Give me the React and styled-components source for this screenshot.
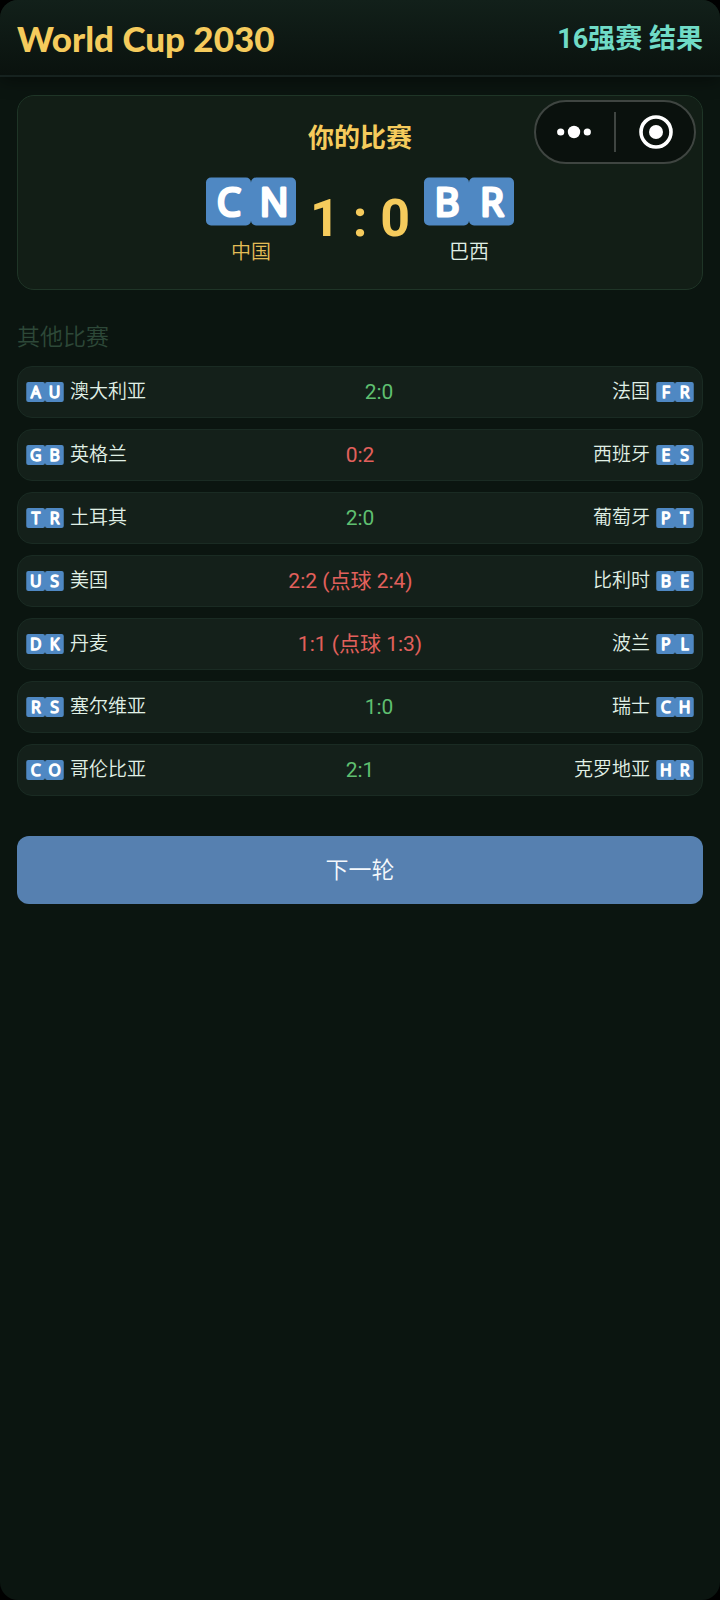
import React from 'react';
import styled, { createGlobalStyle } from 'styled-components';

const GlobalStyle = createGlobalStyle`
  * {
    box-sizing: border-box;
  }
  body {
    margin: 0;
    background: #000;
    color: #e0f0e6;
    font-family: Roboto, 'Noto Sans CJK SC', sans-serif;
  }
`;

const Page = styled.div`
  min-height: 100vh;
  border-radius: 18px;
  overflow: hidden;
  background: #0b1510;
`;

const TopBar = styled.header`
  display: flex;
  align-items: center;
  justify-content: space-between;
  height: 77px;
  padding: 0 17px;
  background: linear-gradient(#12201a, #0a120e);
  border-bottom: 2px solid #16221f;
  box-shadow: 0 4px 16px rgba(0, 0, 0, 0.4);
`;

const Brand = styled.h1`
  margin: 0;
  font-family: Lato, sans-serif;
  font-size: 35px;
  line-height: 46px;
  font-weight: 900;
  color: #f5cb5c;
`;

const Stage = styled.div`
  padding-top: 3px;
  font-size: 27px;
  line-height: 40px;
  font-weight: 700;
  color: #70dbc6;
`;

const Content = styled.main`
  padding: 18px 17px;
`;

const MatchCard = styled.section`
  padding: 25px 16px 23px;
  background: #121e16;
  border: 1px solid #1f3527;
  border-radius: 17px;
`;

const CardTitle = styled.h2`
  margin: 0 0 22px;
  font-size: 26px;
  line-height: 34px;
  font-weight: 700;
  text-align: center;
  color: #f5cb5c;
`;

const Versus = styled.div`
  display: flex;
  align-items: center;
  justify-content: center;
  gap: 14px;
`;

const Team = styled.div`
  display: flex;
  flex-direction: column;
  align-items: center;
  gap: 12px;
  font-size: 20px;
  line-height: 28px;
  font-weight: 350;
  color: ${({ $own }) => ($own ? '#e3bd56' : '#e0f0e6')};
`;

const BigScore = styled.div`
  padding-bottom: 6px;
  font-size: 52px;
  line-height: 60px;
  font-weight: 700;
  color: #f5cb5c;
`;

const SectionTitle = styled.h3`
  margin: 33px 0 13px;
  font-size: 23px;
  line-height: 30px;
  font-weight: 350;
  color: #2d4838;
`;

const MatchList = styled.ul`
  display: flex;
  flex-direction: column;
  gap: 11px;
  margin: 0;
  padding: 0;
  list-style: none;
`;

const MatchRow = styled.li`
  display: flex;
  align-items: center;
  justify-content: space-between;
  height: 52px;
  padding: 0 8px;
  background: #14201a;
  border: 1px solid #1a2b23;
  border-radius: 15px;
`;

const Side = styled.span`
  display: flex;
  align-items: center;
  gap: 6px;
  font-size: 19px;
  line-height: 28px;
  font-weight: 350;
`;

const Score = styled.span`
  font-size: 21px;
  line-height: 28px;
  font-weight: 400;
  color: ${({ $win }) => ($win ? '#5fbf70' : '#e2605c')};
`;

const NextButton = styled.button`
  display: block;
  width: 100%;
  height: 68px;
  margin-top: 40px;
  padding: 0 16px 4px;
  border: none;
  border-radius: 12px;
  background: #5680b0;
  color: #f4f8fc;
  font-family: inherit;
  font-size: 23px;
  font-weight: 350;
  cursor: pointer;
`;

const Capsule = styled.div`
  position: fixed;
  top: 100px;
  right: 24px;
  display: flex;
  align-items: center;
  gap: 2px;
  width: 162px;
  height: 64px;
  background: #0a110d;
  border: 2px solid #3f4541;
  border-radius: 32px;
`;

const CapsuleButton = styled.button`
  display: flex;
  flex: 1;
  align-items: center;
  justify-content: center;
  height: 100%;
  padding: 0;
  border: none;
  background: none;
  cursor: pointer;
`;

const CapsuleDivider = styled.span`
  width: 2px;
  height: 40px;
  background: #3f4541;
`;

const FlagSvg = styled.svg`
  display: block;
  overflow: visible;
  width: ${({ $big }) => ($big ? '90px' : '38px')};
  height: ${({ $big }) => ($big ? '49px' : '20px')};
`;

// regional indicator pair, one blue tile per letter
const Flag = ({ code, big }) => (
  <FlagSvg $big={big} viewBox="0 0 90 48" role="img" aria-label={code}>
    {code.split('').map((letter, i) => (
      <g key={i}>
        <rect x={i * 45} width="45" height="48" rx="5" fill="#4f88c3" />
        <text
          x={i * 45 + 23}
          y="38"
          textAnchor="middle"
          fontFamily="'Open Sans', sans-serif"
          fontSize="38"
          fontWeight={big ? 400 : 500}
          fill="#fff"
          stroke="#fff"
          strokeWidth="3.2"
          strokeLinejoin="round"
        >
          {letter}
        </text>
      </g>
    ))}
  </FlagSvg>
);

const matches = [
  { home: ['AU', '澳大利亚'], away: ['FR', '法国'], score: '2:0', win: true },
  { home: ['GB', '英格兰'], away: ['ES', '西班牙'], score: '0:2', win: false },
  { home: ['TR', '土耳其'], away: ['PT', '葡萄牙'], score: '2:0', win: true },
  { home: ['US', '美国'], away: ['BE', '比利时'], score: '2:2 (点球 2:4)', win: false },
  { home: ['DK', '丹麦'], away: ['PL', '波兰'], score: '1:1 (点球 1:3)', win: false },
  { home: ['RS', '塞尔维亚'], away: ['CH', '瑞士'], score: '1:0', win: true },
  { home: ['CO', '哥伦比亚'], away: ['HR', '克罗地亚'], score: '2:1', win: true },
];

const App = () => {
  return (
    <Page>
      <GlobalStyle />
      <TopBar>
        <Brand>World Cup 2030</Brand>
        <Stage>16强赛 结果</Stage>
      </TopBar>

      <Content>
        <MatchCard>
          <CardTitle>你的比赛</CardTitle>
          <Versus>
            <Team $own>
              <Flag code="CN" big />
              中国
            </Team>
            <BigScore>1 : 0</BigScore>
            <Team>
              <Flag code="BR" big />
              巴西
            </Team>
          </Versus>
        </MatchCard>

        <SectionTitle>其他比赛</SectionTitle>
        <MatchList>
          {matches.map(({ home, away, score, win }) => (
            <MatchRow key={home[0]}>
              <Side>
                <Flag code={home[0]} />
                {home[1]}
              </Side>
              <Score $win={win}>{score}</Score>
              <Side>
                {away[1]}
                <Flag code={away[0]} />
              </Side>
            </MatchRow>
          ))}
        </MatchList>

        <NextButton type="button">下一轮</NextButton>
      </Content>

      <Capsule>
        <CapsuleButton type="button" aria-label="更多">
          <svg width="34" height="14" viewBox="0 0 34 14" fill="#fff">
            <circle cx="3.7" cy="7" r="3.6" />
            <circle cx="17" cy="7" r="6.2" />
            <circle cx="30.3" cy="7" r="3.6" />
          </svg>
        </CapsuleButton>
        <CapsuleDivider />
        <CapsuleButton type="button" aria-label="关闭">
          <svg width="34" height="34" viewBox="0 0 34 34">
            <circle cx="17" cy="17" r="15" fill="none" stroke="#fff" strokeWidth="3.6" />
            <circle cx="17" cy="17" r="7" fill="#fff" />
          </svg>
        </CapsuleButton>
      </Capsule>
    </Page>
  );
};

export default App;
